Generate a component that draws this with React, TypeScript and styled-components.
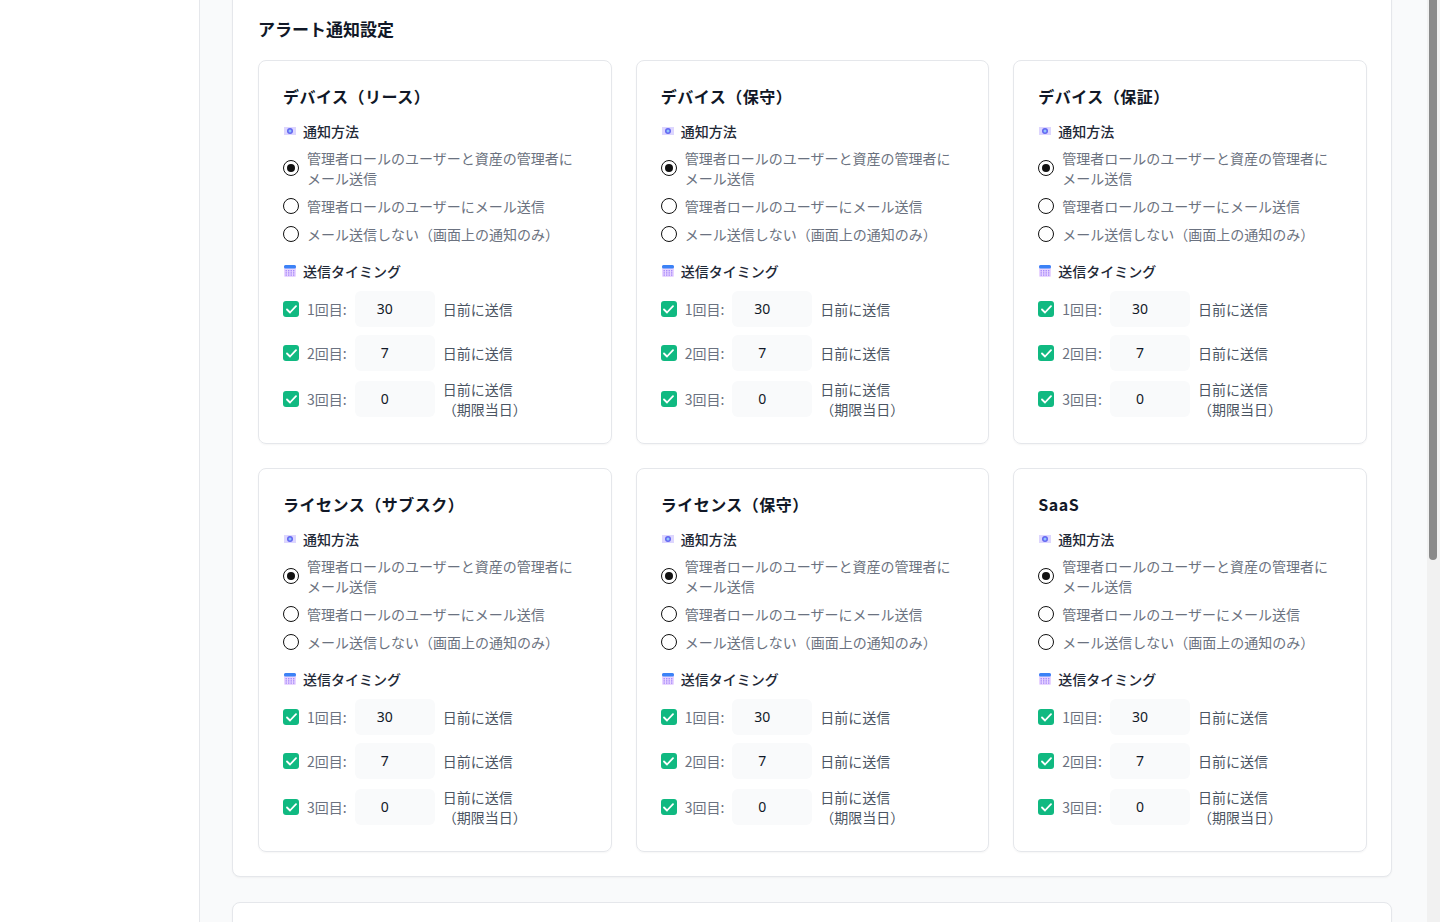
import React from "react";
import styled, { createGlobalStyle } from "styled-components";

const Global = createGlobalStyle`
  html, body { margin: 0; padding: 0; height: 100%; overflow: hidden; }
  body { font-family: "Noto Sans CJK JP", "Noto Sans", sans-serif; color: #111827; }
`;

const Page = styled.div`display: flex; height: 922px; width: 1440px; overflow: hidden;`;
const Sidebar = styled.div`width: 199px; flex-shrink: 0; background: #fff; border-right: 1px solid #e5e7eb;`;
const Main = styled.div`flex: 1; background: #f9fafb; padding: 0 35px 0 32px; margin-top: -22px;`;
const Scroll = styled.div`width: 13px; background: #f1f1f1; position: relative; flex-shrink: 0;`;
const Thumb = styled.div`position: absolute; left: 2px; top: 0; width: 8px; height: 560px; background: #8a8a8a; border-radius: 0 0 4px 4px;`;
const Panel = styled.section`
  background: #fff; border: 1px solid #e5e7eb; border-radius: 8px; box-shadow: 0 1px 2px rgba(0,0,0,0.04);
  padding: 37px 24px 24px 25px;
`;
const Panel2 = styled(Panel)`margin-top: 25px; height: 60px; padding: 0;`;
const PanelTitle = styled.h2`margin: 0 0 18px; font-size: 17px; font-weight: 700; line-height: 26px;`;
const Grid = styled.div`display: grid; grid-template-columns: repeat(3, 1fr); gap: 24px 24px;`;
const Card = styled.div`border: 1px solid #e5e7eb; border-radius: 8px; padding: 23px 24px 24px 24px; box-shadow: 0 1px 2px rgba(0,0,0,0.04);`;
const CardTitle = styled.h3`margin: 0 0 12px; font-size: 16px; font-weight: 700; line-height: 24px; letter-spacing: 0.5px;`;
const SectionHead = styled.div<{ $gap?: number }>`display: flex; align-items: center; gap: 6px; font-size: 14px; font-weight: 500; color: #1f2937; height: 22px; margin-top: ${p => p.$gap ?? 0}px; margin-bottom: 6px;`;
const Radios = styled.div`display: flex; flex-direction: column; gap: 8px; margin-bottom: 16px;`;
const RadioRow = styled.label`display: flex; align-items: center; gap: 8px; font-size: 14px; line-height: 20px; color: #6b7280; line-break: anywhere;`;
const Radio = styled.span<{ $on?: boolean }>`
  width: 16px; height: 16px; flex-shrink: 0; border-radius: 50%; box-sizing: border-box;
  border: 1.5px solid #111; display: flex; align-items: center; justify-content: center;
  &::after { content: ""; width: 8px; height: 8px; border-radius: 50%; background: ${p => p.$on ? "#111" : "transparent"}; }
`;
const Timings = styled.div`display: flex; flex-direction: column; gap: 8px; margin-top: 9px;`;
const TRow = styled.div`display: flex; align-items: center; gap: 8px; font-size: 14px; line-height: 20px; color: #6b7280;`;
const Check = styled.span`width: 16px; height: 16px; flex-shrink: 0; border-radius: 3px; background: #10b981; display: flex; align-items: center; justify-content: center;`;
const Label = styled.span`flex: 0 1 auto;`;
const NumBox = styled.div`width: 80px; height: 36px; flex-shrink: 0; background: #f9fafb; border-radius: 6px; display: flex; align-items: center; justify-content: center; padding-right: 20px; box-sizing: border-box; color: #111827; font-size: 14px; font-family: "Noto Sans", sans-serif;`;
const After = styled.span`flex: 0 1 auto; color: #4b5563; white-space: pre-line;`;

const RadioIcon = () => (
  <svg width="14" height="12" viewBox="0 0 14 12"><rect x="1" y="2" width="12" height="8" fill="#ddd6fe" /><circle cx="7" cy="6" r="3" fill="#6366f1" /><circle cx="7" cy="6" r="1.5" fill="#93c5fd" /></svg>
);
const CalIcon = () => (
  <svg width="14" height="14" viewBox="0 0 14 14"><rect x="1" y="1" width="12" height="12" rx="1.5" fill="#e9d5ff" /><rect x="1" y="1" width="12" height="3.5" rx="1.5" fill="#3b82f6" />
    {[0,1,2].map(r => [0,1,2,3].map(c => <rect key={r+"-"+c} x={2.5+c*2.5} y={6+r*2.2} width="1.4" height="1.4" fill="#a78bfa" />))}
  </svg>
);
const Tick = () => (<svg width="11" height="9" viewBox="0 0 11 9"><path d="M1 4.5 L4 7.5 L10 1.2" stroke="#fff" strokeWidth="1.8" fill="none" strokeLinecap="round" strokeLinejoin="round" /></svg>);

const titles = ["デバイス（リース）", "デバイス（保守）", "デバイス（保証）", "ライセンス（サブスク）", "ライセンス（保守）", "SaaS"];
const rows = [
  { l: "1回目:", v: "30", t: "日前に送信" },
  { l: "2回目:", v: "7", t: "日前に送信" },
  { l: "3回目:", v: "0", t: "日前に送信\n（期限当日）" },
];

const SettingCard = ({ title }: { title: string }) => (
  <Card>
    <CardTitle>{title}</CardTitle>
    <SectionHead><RadioIcon />通知方法</SectionHead>
    <Radios>
      <RadioRow><Radio $on />管理者ロールのユーザーと資産の管理者にメール送信</RadioRow>
      <RadioRow><Radio />管理者ロールのユーザーにメール送信</RadioRow>
      <RadioRow><Radio />メール送信しない（画面上の通知のみ）</RadioRow>
    </Radios>
    <SectionHead $gap={3}><CalIcon />送信タイミング</SectionHead>
    <Timings>
      {rows.map(r => (
        <TRow key={r.l}><Check><Tick /></Check><Label>{r.l}</Label><NumBox>{r.v}</NumBox><After>{r.t}</After></TRow>
      ))}
    </Timings>
  </Card>
);

export default function App() {
  return (
    <Page>
      <Global />
      <Sidebar />
      <Main>
        <Panel>
          <PanelTitle>アラート通知設定</PanelTitle>
          <Grid>{titles.map(t => <SettingCard key={t} title={t} />)}</Grid>
        </Panel>
        <Panel2 />
      </Main>
      <Scroll><Thumb /></Scroll>
    </Page>
  );
}
